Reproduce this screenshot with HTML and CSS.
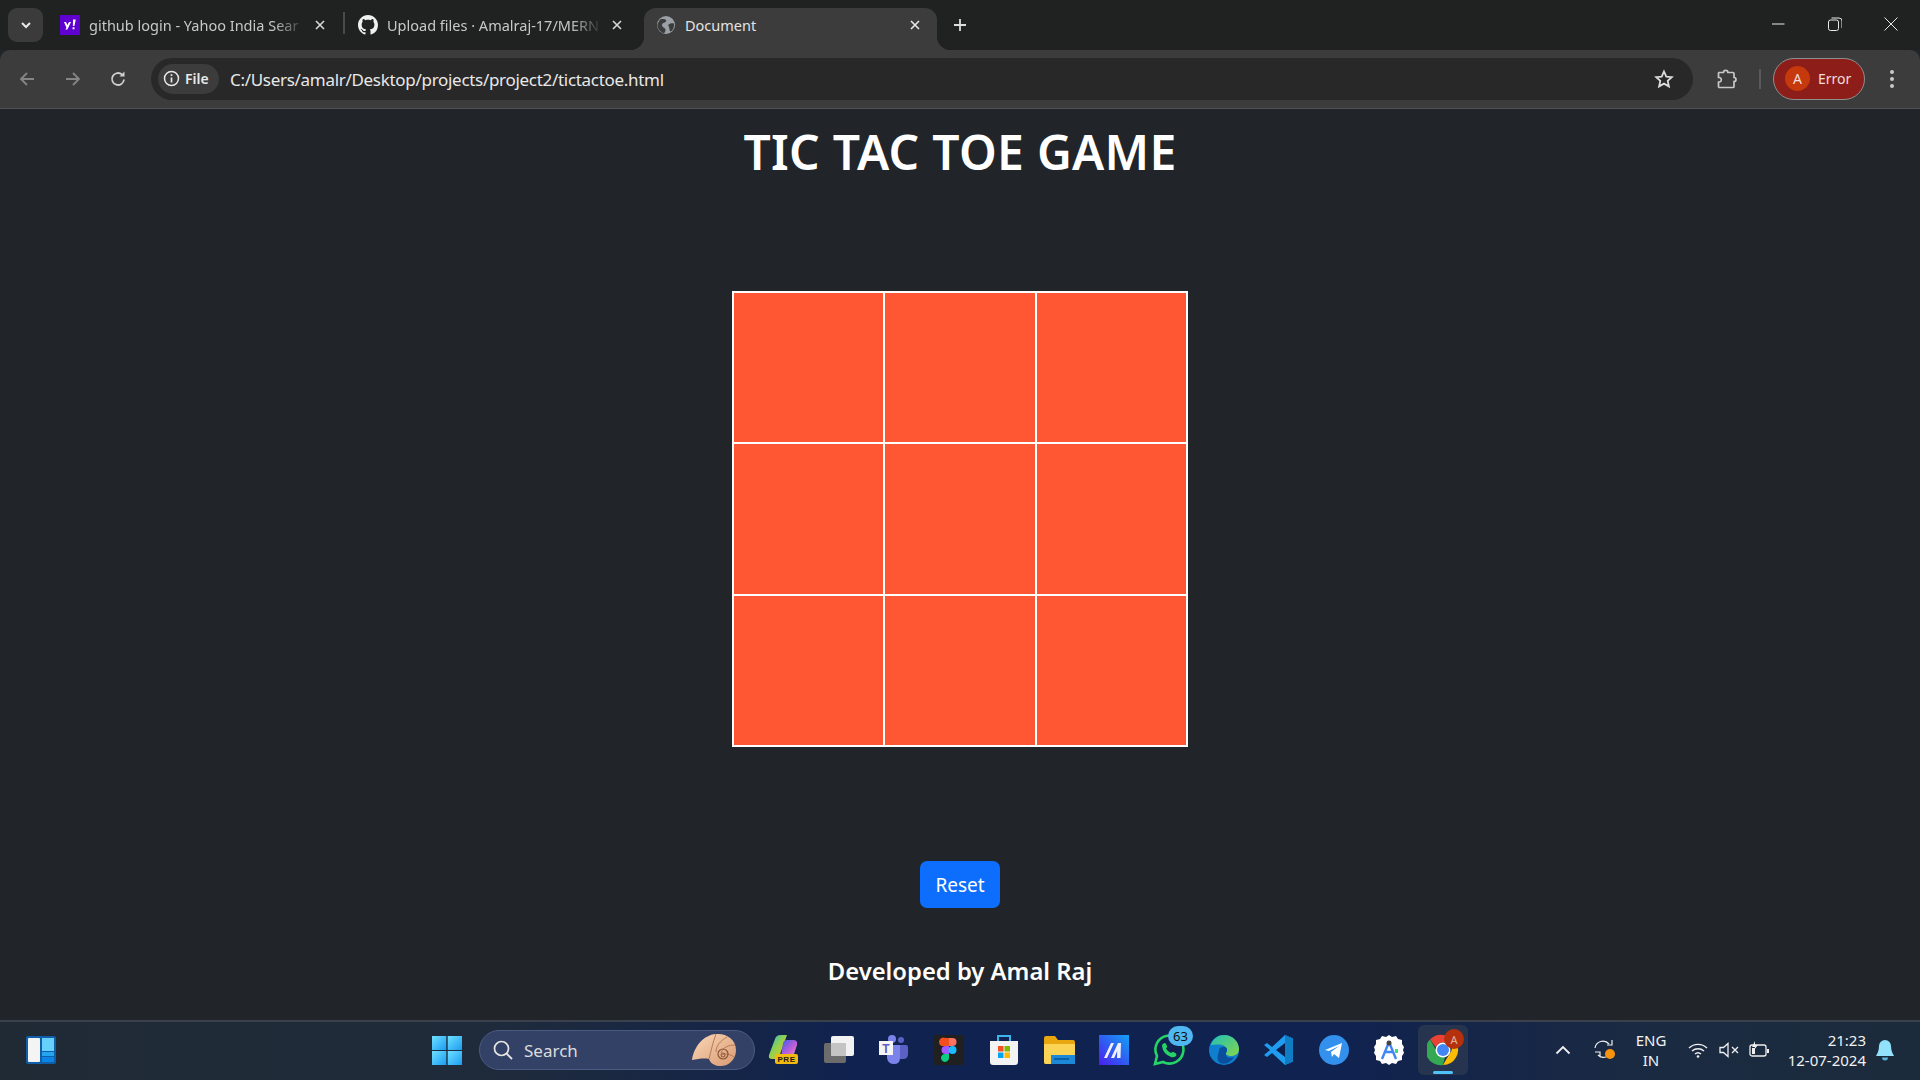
FILE: index.html
```html
<!DOCTYPE html>
<html lang="en">
<head>
    <meta charset="UTF-8">
    <meta name="viewport" content="width=device-width, initial-scale=1.0">
    <title>Document</title>
    <link rel="stylesheet" href="styles.css">
</head>
<body>
    <!-- tab strip -->
    <div class="tabstrip">
        <div class="tab-search">
            <svg width="12" height="12" viewBox="0 0 12 12"><path d="M2 4l4 4 4-4" fill="none" stroke="#e8e8e8" stroke-width="2"/></svg>
        </div>
        <div class="tab tab-one">
            <svg class="favicon" viewBox="0 0 20 20"><rect width="20" height="20" fill="#5f01d1"/><path d="M4 7h2l1.4 3L9 7h2l-3.6 7.5H5.4l1-2.1zM12.6 12.2h1.9v2h-1.900zM13 4.500h2.800l-1.400 6.600h-1.500z" fill="#fff"/></svg>
            <span class="tab-title">github login - Yahoo India Sear</span>
            <svg class="tab-close" viewBox="0 0 12 12"><path d="M2 2l8 8M10 2l-8 8" stroke="#d8d8d8" stroke-width="1.600"/></svg>
        </div>
        <div class="tab-sep"></div>
        <div class="tab tab-two">
            <svg class="favicon" viewBox="0 0 16 16"><path fill="#f0f0f0" d="M8 0C3.580 0 0 3.580 0 8c0 3.540 2.290 6.530 5.470 7.590.4.070.55-.17.55-.38 0-.19-.01-.82-.01-1.490-2.010.37-2.530-.49-2.690-.94-.09-.23-.48-.94-.82-1.130-.28-.15-.68-.52-.01-.53.63-.01 1.080.58 1.230.82.720 1.210 1.870.87 2.330.66.070-.52.28-.87.510-1.070-1.780-.2-3.640-.89-3.640-3.950 0-.87.310-1.590.820-2.150-.08-.2-.36-1.020.08-2.120 0 0 .67-.21 2.200.82.640-.18 1.320-.27 2-.27s1.360.09 2 .27c1.530-1.040 2.200-.82 2.200-.82.440 1.100.160 1.920.08 2.120.510.560.820 1.270.820 2.150 0 3.070-1.870 3.750-3.650 3.950.290.250.540.730.540 1.480 0 1.070-.010 1.930-.010 2.200 0 .210.150.460.550.380A8.010 8.010 0 0 0 16 8c0-4.420-3.580-8-8-8z"/></svg>
            <span class="tab-title">Upload files · Amalraj-17/MERN</span>
            <svg class="tab-close" viewBox="0 0 12 12"><path d="M2 2l8 8M10 2l-8 8" stroke="#d8d8d8" stroke-width="1.600"/></svg>
        </div>
        <div class="tab tab-active">
            <svg class="favicon favicon-globe" viewBox="0 0 20 20"><circle cx="10" cy="10" r="9" fill="#9aa0a6"/><path d="M4 4.500c2-.8 5-.5 6 .5 1 1.200-1 2.500-2.500 3S5.500 10 6.500 11.500 10 13 9.500 15.500 8 18 7 18C3 16 1 12.500 1.500 9zM12.500 9.500c1.500-1 4-1.500 5.500-.8.400 3-.800 6-3 7.800-1 .2-1.500-1-1.500-2.500s-1.800-3.500-1-4.500z" fill="#3c3c3c"/></svg>
            <span class="tab-title">Document</span>
            <svg class="tab-close" viewBox="0 0 12 12"><path d="M2 2l8 8M10 2l-8 8" stroke="#e8e8e8" stroke-width="1.600"/></svg>
        </div>
        <svg class="new-tab" width="14" height="14" viewBox="0 0 14 14"><path d="M7 1v12M1 7h12" stroke="#dcdcdc" stroke-width="1.800"/></svg>
        <div class="window-controls">
            <svg width="14" height="14" viewBox="0 0 14 14"><path d="M1 7h12.500" stroke="#e8e8e8" stroke-width="1"/></svg>
            <svg width="14" height="14" viewBox="0 0 14 14"><rect x=".5" y="3" width="10" height="10.500" rx="2" fill="none" stroke="#e8e8e8"/><path d="M3.500 1h7.500q3 0 3 3v7" fill="none" stroke="#e8e8e8"/></svg>
            <svg width="14" height="14" viewBox="0 0 14 14"><path d="M.5.500l13 13M13.500.5l-13 13" stroke="#e8e8e8" stroke-width="1"/></svg>
        </div>
    </div>

    <!-- address bar -->
    <div class="toolbar">
        <div class="nav-buttons">
            <svg width="18" height="18" viewBox="0 0 18 18"><path d="M16 9H3M9 3L3 9l6 6" fill="none" stroke="#858585" stroke-width="1.800"/></svg>
            <svg width="18" height="18" viewBox="0 0 18 18"><path d="M2 9h13M9 3l6 6-6 6" fill="none" stroke="#858585" stroke-width="1.800"/></svg>
            <svg width="18" height="18" viewBox="0 0 18 18"><path d="M15 9.500A6 6 0 1 1 13 4.500" fill="none" stroke="#d0d0d0" stroke-width="1.800"/><path d="M15.500 1.500v5h-5z" fill="#d0d0d0"/></svg>
        </div>
        <div class="omnibox">
            <div class="file-chip">
                <svg width="17" height="17" viewBox="0 0 17 17"><circle cx="8.500" cy="8.500" r="7" fill="none" stroke="#e8e8e8" stroke-width="1.500"/><path d="M8.500 7.500v5M8.500 4.300v1.700" stroke="#e8e8e8" stroke-width="1.700"/></svg>
                <span>File</span>
            </div>
            <span class="url">C:/Users/amalr/Desktop/projects/project2/tictactoe.html</span>
            <svg class="star" width="20" height="20" viewBox="0 0 20 20"><path d="M10 2.500l2.300 5.100 5.500.6-4.100 3.700 1.200 5.500L10 14.600l-4.900 2.800 1.200-5.500-4.100-3.700 5.500-.6z" fill="none" stroke="#dcdcdc" stroke-width="1.800"/></svg>
        </div>
        <svg class="puzzle" width="22" height="22" viewBox="0 0 22 22"><path d="M3 4.500h4.500a2.200 2.200 0 0 1 4.400 0H17a1 1 0 0 1 1 1v4a2 2 0 0 1 0 4v5a1 1 0 0 1-1 1H3.500a1 1 0 0 1-1-1v-4.500h1a2.300 2.300 0 0 0 0-4.500h-1V5.500a1 1 0 0 1 .5-1z" fill="none" stroke="#c8c8c8" stroke-width="1.700"/></svg>
        <div class="toolbar-sep"></div>
        <div class="profile-pill">
            <span class="avatar">A</span>
            <span>Error</span>
        </div>
        <svg class="menu-dots" width="6" height="20" viewBox="0 0 6 20"><circle cx="3" cy="3" r="2" fill="#c8c8c8"/><circle cx="3" cy="10" r="2" fill="#c8c8c8"/><circle cx="3" cy="17" r="2" fill="#c8c8c8"/></svg>
    </div>

    <!-- the page itself -->
    <main class="page">
        <h1 class="game-title">TIC TAC TOE GAME</h1>
        <div class="board">
            <button class="cell"></button>
            <button class="cell"></button>
            <button class="cell"></button>
            <button class="cell"></button>
            <button class="cell"></button>
            <button class="cell"></button>
            <button class="cell"></button>
            <button class="cell"></button>
            <button class="cell"></button>
        </div>
        <button class="reset-button">Reset</button>
        <h4 class="credit">Developed by Amal Raj</h4>
    </main>

    <!-- windows taskbar -->
    <footer class="taskbar">
        <svg class="widgets" width="30" height="30" viewBox="0 0 30 30">
            <rect width="30" height="28" y="1" rx="2" fill="#0e5fa8"/>
            <rect x="2" y="3" width="12" height="24" rx="1" fill="#f4f4f4"/>
            <rect x="16" y="3" width="12" height="13" fill="#66cffc"/>
            <rect x="16" y="17" width="12" height="4" fill="#25a4f0"/>
            <rect x="16" y="22" width="12" height="5" fill="#0c84e6"/>
        </svg>

        <svg class="start" width="30" height="30" viewBox="0 0 30 30">
            <defs><linearGradient id="winblue" x1="0" y1="0" x2="1" y2="1"><stop offset="0" stop-color="#6fe0ff"/><stop offset="1" stop-color="#1a9cf2"/></linearGradient></defs>
            <rect x="0" y="1" width="14.300" height="14" fill="url(#winblue)"/>
            <rect x="15.700" y="1" width="14.300" height="14" fill="url(#winblue)"/>
            <rect x="0" y="16" width="14.300" height="14" fill="url(#winblue)"/>
            <rect x="15.700" y="16" width="14.300" height="14" fill="url(#winblue)"/>
        </svg>

        <div class="search-box">
            <svg width="22" height="22" viewBox="0 0 22 22"><circle cx="9.500" cy="9.500" r="7" fill="none" stroke="#e6e6e6" stroke-width="1.700"/><path d="M14.500 14.500l5.500 5.500" stroke="#e6e6e6" stroke-width="1.900"/></svg>
            <span>Search</span>
            <svg class="shell" width="46" height="34" viewBox="0 0 46 34">
                <defs><linearGradient id="shellfill" x1="0" y1="0" x2="1" y2="1"><stop offset="0" stop-color="#fbd8b8"/><stop offset="1" stop-color="#d99a72"/></linearGradient></defs>
                <path d="M1 27C3 14 12 2 25 1c10-1 20 5 20 16 0 10-8 17-17 16-6-.5-9-4-10-7-5-1-11 0-17 1z" fill="url(#shellfill)"/>
                <path d="M25 1c-3 8-5 17-7 25M36 4c-7 4-11 9-11 15M44 12c-6 0-12 2-14 8M43 24c-4-3-9-4-12-2" stroke="#b87a58" stroke-width="1" fill="none"/>
                <circle cx="32" cy="21" r="5" fill="none" stroke="#8a5536" stroke-width="1.200"/>
                <circle cx="32" cy="22" r="2" fill="none" stroke="#8a5536"/>
            </svg>
        </div>

        <div class="apps">
            <div class="app">
                <svg width="32" height="32" viewBox="0 0 32 32">
                    <defs><linearGradient id="cop" x1="0" y1="0" x2="1" y2="1"><stop offset="0" stop-color="#1fb6e6"/><stop offset=".45" stop-color="#8fd14f"/><stop offset="1" stop-color="#f5c518"/></linearGradient><linearGradient id="cop2" x1="0" y1="0" x2="1" y2="1"><stop offset="0" stop-color="#3a5cf0"/><stop offset=".6" stop-color="#c65ed6"/><stop offset="1" stop-color="#f0a0b0"/></linearGradient></defs>
                    <path d="M7 5q1-4 6-4h6l-8 22q-1 2-4 2H4q-4 0-3-4z" fill="url(#cop)"/>
                    <path d="M15 9q1-3 4-3h6q5 0 4 5l-3 9q-1 3-5 3h-8z" fill="url(#cop2)"/>
                    <rect x="7" y="20" width="23" height="10" rx="2" fill="#f2b90f"/>
                    <text x="18.500" y="28.300" class="pre-text">PRE</text>
                </svg>
            </div>
            <div class="app">
                <svg width="32" height="32" viewBox="0 0 32 32"><rect x="1" y="9" width="22" height="20" rx="2" fill="#6c6c6c"/><rect x="8" y="2" width="23" height="20" rx="2" fill="#f2f2f2"/><rect x="8" y="9" width="15" height="13" rx="1" fill="#c4c4c4"/></svg>
            </div>
            <div class="app">
                <svg width="32" height="32" viewBox="0 0 32 32"><circle cx="23" cy="6" r="3" fill="#5b61c4"/><circle cx="14" cy="5" r="4" fill="#7b83eb"/><path d="M19 11h9q2 0 2 2v7q0 5-5 5h-3z" fill="#5b61c4"/><path d="M9 11h12q1 0 1 1v12q0 6-6 6t-7-6z" fill="#7b83eb"/><rect x="1" y="7" width="14" height="14" fill="#f5f5f5"/><text x="8" y="18.500" class="teams-text">T</text></svg>
            </div>
            <div class="app">
                <svg width="30" height="30" viewBox="0 0 30 30"><rect width="30" height="30" fill="#202020"/><path d="M7.500 11a4 4 0 0 1 4-8H15v8z" fill="#f24e1e"/><path d="M15 3h3.500a4 4 0 0 1 0 8H15z" fill="#ff7262"/><path d="M15 11H11.500a4 4 0 0 0 0 8H15z" fill="#a259ff"/><circle cx="18.500" cy="15" r="4" fill="#1abcfe"/><path d="M15 19H11.500a4 4 0 1 0 3.500 4z" fill="#0acf83"/></svg>
            </div>
            <div class="app">
                <svg width="30" height="32" viewBox="0 0 30 32"><path d="M9 7V2h12v5" fill="none" stroke="#3bb4ec" stroke-width="2"/><path d="M1 7h28v21q0 3-3 3H4q-3 0-3-3z" fill="#f3f3f3"/><rect x="9" y="12" width="5.500" height="5.500" fill="#f25022"/><rect x="15.500" y="12" width="5.500" height="5.500" fill="#7fba00"/><rect x="9" y="18.500" width="5.500" height="5.500" fill="#00a4ef"/><rect x="15.500" y="18.500" width="5.500" height="5.500" fill="#ffb900"/></svg>
            </div>
            <div class="app">
                <svg width="32" height="30" viewBox="0 0 32 30"><path d="M1 3q0-2 2-2h9l3 4h15q2 0 2 2v20q0 2-2 2H3q-2 0-2-2z" fill="#e8a70f"/><path d="M1 9h31v18q0 2-2 2H3q-2 0-2-2z" fill="#fbd456"/><rect x="8" y="20" width="24" height="9" fill="#1e88d8"/><rect x="11" y="23" width="15" height="2" fill="#0a5fa8"/></svg>
            </div>
            <div class="app">
                <svg width="30" height="30" viewBox="0 0 30 30"><defs><linearGradient id="mblue" x1="0" y1="1" x2="1" y2="0"><stop offset="0" stop-color="#4b1df0"/><stop offset="1" stop-color="#13a0f5"/></linearGradient></defs><rect width="30" height="30" fill="url(#mblue)"/><path d="M5 23l7-15h3l-7 15zM12 23l7-15h3l-.5 15H18l.2-7-3 7z" fill="#eef0ff"/></svg>
            </div>
            <div class="app">
                <svg width="32" height="32" viewBox="0 0 32 32"><path d="M2 30l2-8A14 14 0 1 1 10 28z" fill="none" stroke="#25d366" stroke-width="2.600"/><path d="M10 10q2-2 3 0l1 2q.5 1-1 2.500 1.500 3 5 4.500 1.500-1.500 2.500-1l2.500 1.500q1 1 0 2.500-2 2-5 1-8-3-9-11 0-1.500 1-2.500z" fill="#25d366"/></svg>
                <span class="count-badge">63</span>
            </div>
            <div class="app">
                <svg width="30" height="30" viewBox="0 0 30 30"><defs><linearGradient id="edge1" x1="0" y1="0" x2="1" y2="1"><stop offset="0" stop-color="#1fc0b8"/><stop offset="1" stop-color="#86d64a"/></linearGradient></defs><circle cx="15" cy="15" r="15" fill="#0f7fd0"/><path d="M2 10C4 3 10 0 15 0c9 0 15 7 15 14 0 5-4 7-8 7-3 0-6-2-5-3 2-2 1-7-4-8-4-1-9 0-11 0z" fill="url(#edge1)"/><path d="M10 16c0-3 3-5 6-4 3 1 2 4 1 6-1 4 3 6 8 4-3 5-8 8-14 6-3-2-3-7-1-12z" fill="#0a4f9c"/></svg>
            </div>
            <div class="app">
                <svg width="30" height="30" viewBox="0 0 30 30"><path d="M21 0l8 3.500v23L21 30 8 18l-5 4-3-2 6-5-6-5 3-2 5 4z" fill="#1f9cf0"/><path d="M21 0l8 3.500v23L21 30z" fill="#0f7cc4"/><path d="M21 8v14l-9-7z" fill="#0b1f4f"/></svg>
            </div>
            <div class="app">
                <svg width="30" height="30" viewBox="0 0 30 30"><circle cx="15" cy="15" r="15" fill="#3390ec"/><path d="M6 15l17-7-3 15-5-4-2 3-1-5 8-6-10 5z" fill="#fff"/></svg>
            </div>
            <div class="app">
                <svg width="30" height="30" viewBox="0 0 30 30"><path d="M15 0l3 2 4-1 2 3 4 1 0 4 2 3-1 3 1 3-2 3 0 4-4 1-2 3-4-1-3 2-3-2-4 1-2-3-4-1 0-4-2-3 1-3-1-3 2-3 0-4 4-1 2-3 4 1z" fill="#fff"/><path d="M15 7l-7 17M15 7l7 17M10 17h10" stroke="#4285f4" stroke-width="2.400" fill="none"/><circle cx="15" cy="8" r="2.500" fill="#444"/><path d="M21 14h3v4h-3z" fill="#3ddc84"/></svg>
            </div>
            <div class="app app-active">
                <svg width="32" height="32" viewBox="0 0 32 32"><path d="M16 1a15 15 0 0 1 13 7.500H16a7.500 7.500 0 0 0-7 5L3 5.500A15 15 0 0 1 16 1z" fill="#ea4335"/><path d="M29 8.500A15 15 0 0 1 16 31l6.500-11.300a7.500 7.500 0 0 0 0-11.200z" fill="#fbbc04"/><path d="M16 31A15 15 0 0 1 3 5.500l6.500 11.300a7.500 7.500 0 0 0 8.500 6z" fill="#34a853"/><circle cx="16" cy="16" r="7.500" fill="#fff"/><circle cx="16" cy="16" r="6" fill="#4285f4"/></svg>
                <span class="chrome-badge">A</span>
                <span class="running-bar"></span>
            </div>
        </div>

        <div class="tray">
            <svg class="tray-chevron" width="16" height="10" viewBox="0 0 16 10"><path d="M1.500 8.500L8 2l6.500 6.500" fill="none" stroke="#f0f0f0" stroke-width="1.800"/></svg>
            <svg class="tray-sync" width="22" height="22" viewBox="0 0 22 22"><path d="M1 9a8 8 0 0 1 14-4" fill="none" stroke="#f0f0f0" stroke-width="1.200"/><path d="M18 1v5h-5" fill="none" stroke="#f0f0f0" stroke-width="1.200"/><path d="M12 18a8 8 0 0 1-8-2M1 13h5v5" fill="none" stroke="#f0f0f0" stroke-width="1.200"/><circle cx="16" cy="15" r="5" fill="#f7930e"/></svg>
            <div class="lang">ENG<br>IN</div>
            <svg class="tray-wifi" width="20" height="16" viewBox="0 0 20 16"><path d="M1 6a13 13 0 0 1 18 0M4 9a9 9 0 0 1 12 0M7 12a4.500 4.500 0 0 1 6 0" fill="none" stroke="#f0f0f0" stroke-width="1.400"/><circle cx="10" cy="14.500" r="1.300" fill="#f0f0f0"/></svg>
            <svg class="tray-sound" width="20" height="16" viewBox="0 0 20 16"><path d="M1 5.500h3.500L9 1.500v13l-4.500-4H1z" fill="none" stroke="#f0f0f0" stroke-width="1.300"/><path d="M13 5l6 6M19 5l-6 6" stroke="#f0f0f0" stroke-width="1.300"/></svg>
            <svg class="tray-battery" width="20" height="18" viewBox="0 0 20 18"><rect x="1" y="4" width="16" height="11" rx="2" fill="none" stroke="#f0f0f0" stroke-width="1.300"/><rect x="18" y="8" width="2" height="4" fill="#f0f0f0"/><path d="M3 13V7h3v6z" fill="#f0f0f0"/><path d="M6 0L3 6h3l-1 3 4-5H6z" fill="#f0f0f0"/></svg>
            <div class="clock">21:23<br>12-07-2024</div>
            <svg class="tray-bell" width="18" height="22" viewBox="0 0 18 22"><path d="M9 1a6 6 0 0 1 6 6c0 5 2 8 3 10H0c1-2 3-5 3-10a6 6 0 0 1 6-6z" fill="#93e2fb"/><path d="M6 18.500h6a3 3 0 0 1-6 0z" fill="#5ab4d8"/></svg>
        </div>
    </footer>
</body>
</html>
```

FILE: styles.css
```css
* {
    box-sizing: border-box;
}

body {
    margin: 0;
    height: 1080px;
    overflow: hidden;
    display: flex;
    flex-direction: column;
    background-color: #212529;
    font-family: "Noto Sans", "Open Sans", sans-serif;
    color: white;
}

/* Tab strip */
.tabstrip {
    height: 50px;
    flex-shrink: 0;
    display: flex;
    align-items: flex-end;
    padding-left: 8px;
    background-color: #202222;
}

.tab-search {
    width: 35px;
    height: 34px;
    margin-bottom: 8px;
    margin-right: 7px;
    display: flex;
    align-items: center;
    justify-content: center;
    border-radius: 9px;
    background-color: #3b3b3b;
}

.tab {
    height: 42px;
    display: flex;
    align-items: center;
    font-size: 14.500px;
    color: #c8c8c8;
    padding-bottom: 8px;
}

.tab-one {
    width: 293px;
    padding-left: 10px;
}

.tab-two {
    width: 291px;
    padding-left: 13px;
    margin-right: 8px;
}

.favicon {
    width: 20px;
    height: 20px;
    flex-shrink: 0;
}

.favicon-globe {
    margin-right: 9px;
}

.tab-one .favicon, .tab-two .favicon {
    margin-right: 9px;
}

.tab-title {
    flex: 1;
    white-space: nowrap;
    -webkit-mask-image: linear-gradient(to right, black 85%, transparent 100%);
    mask-image: linear-gradient(to right, black 85%, transparent 100%);
}

.tab-close {
    width: 12px;
    height: 12px;
    margin-left: 8px;
    margin-right: 17px;
    flex-shrink: 0;
}

.tab-two .tab-close {
    margin-right: 13px;
}

.tab-sep {
    width: 2px;
    height: 22px;
    margin-bottom: 16px;
    background-color: #4a4a4a;
}

.tab-active {
    position: relative;
    width: 293px;
    padding-left: 12px;
    border-radius: 12px 12px 0 0;
    background-color: #3c3c3c;
    color: #e3e3e3;
}

.tab-active .tab-title {
    -webkit-mask-image: none;
    mask-image: none;
}

.tab-active .tab-close {
    margin-right: 16px;
}

/* the little flares either side of the active tab */
.tab-active::before, .tab-active::after {
    content: "";
    position: absolute;
    bottom: 0;
    width: 14px;
    height: 14px;
}

.tab-active::before {
    left: -14px;
    background: radial-gradient(circle at 0 0, transparent 14px, #3c3c3c 14.500px);
}

.tab-active::after {
    right: -14px;
    background: radial-gradient(circle at 100% 0, transparent 14px, #3c3c3c 14.500px);
}

.new-tab {
    margin-left: 16px;
    margin-bottom: 18px;
}

.window-controls {
    margin-left: auto;
    width: 127px;
    margin-right: 22px;
    height: 50px;
    display: flex;
    align-items: center;
    justify-content: space-between;
    padding-bottom: 2px;
}

/* Address bar */
.toolbar {
    height: 59px;
    flex-shrink: 0;
    display: flex;
    align-items: center;
    padding: 0 0 1px 18px;
    background-color: #3c3c3c;
    border-bottom: 1px solid #4e5054;
    border-radius: 10px 10px 0 0;
}

.nav-buttons {
    width: 109px;
    display: flex;
    justify-content: space-between;
}

.omnibox {
    width: 1542px;
    height: 42px;
    margin-left: 24px;
    display: flex;
    align-items: center;
    padding-left: 7px;
    border-radius: 21px;
    background-color: #282828;
}

.file-chip {
    width: 61px;
    height: 30px;
    display: flex;
    align-items: center;
    gap: 5px;
    padding-left: 5px;
    border-radius: 15px;
    background-color: #3c3c3c;
    font-size: 14px;
    font-weight: 600;
    color: #e8e8e8;
}

.url {
    margin-left: 11px;
    padding-top: 1px;
    font-size: 17px;
    letter-spacing: -.3px;
    color: #e8e8e8;
}

.star {
    margin-left: auto;
    margin-right: 19px;
}

.puzzle {
    margin-left: 23px;
}

.toolbar-sep {
    width: 2px;
    height: 20px;
    margin-left: 21px;
    background-color: #5a5a5a;
}

.profile-pill {
    width: 92px;
    height: 42px;
    margin-left: 12px;
    display: flex;
    align-items: center;
    gap: 8px;
    padding-left: 11px;
    border: 1px solid #8e8e8e;
    border-radius: 21px;
    background-color: #8c1d18;
    font-size: 14px;
    color: #f2dedc;
}

.avatar {
    width: 25px;
    height: 25px;
    display: flex;
    align-items: center;
    justify-content: center;
    border-radius: 50%;
    background-color: #c5390c;
}

.menu-dots {
    margin-left: 24px;
}

/* Page */
.page {
    flex: 1;
    display: flex;
    flex-direction: column;
    align-items: center;
}

.game-title {
    margin: 11px 0 0;
    font-size: 48px;
    line-height: 64px;
    font-weight: 600;
    letter-spacing: .3px;
}

.board {
    width: 456px;
    height: 456px;
    margin-top: 107px;
    display: grid;
    grid-template-columns: repeat(3, 1fr);
    grid-template-rows: repeat(3, 1fr);
    gap: 2px;
    padding: 2px;
    background-color: white;
}

.cell {
    padding: 0;
    border: none;
    background-color: #ff5733;
}

.reset-button {
    width: 80px;
    height: 47px;
    margin-top: 114px;
    border: none;
    border-radius: 7px;
    background-color: #0d6efd;
    color: white;
    font-family: inherit;
    font-size: 19px;
}

.credit {
    margin: 45px 0 0;
    font-size: 23.800px;
    line-height: 36px;
    font-weight: 600;
}

/* Taskbar */
.taskbar {
    height: 60px;
    flex-shrink: 0;
    display: flex;
    align-items: center;
    padding: 0 0 2px 26px;
    border-top: 2px solid #3a414d;
    background: linear-gradient(to right, #1f2a35 0%, #1f2b3a 25%, #10224f 45%, #10224f 70%, #1a2a42 85%, #1c2b3b 100%);
}

.widgets {
    flex-shrink: 0;
}

.start {
    flex-shrink: 0;
    margin-left: 376px;
}

.search-box {
    width: 276px;
    height: 40px;
    margin-left: 17px;
    display: flex;
    align-items: center;
    padding-left: 12px;
    border: 1px solid #4a5a80;
    border-radius: 20px;
    background-color: #344166;
    font-size: 17px;
    color: #dcdcdc;
}

.search-box span {
    margin-left: 10px;
}

.shell {
    margin-left: auto;
    margin-right: 17px;
}

.apps {
    display: flex;
    margin-left: 1px;
}

.app {
    position: relative;
    width: 55px;
    height: 50px;
    display: flex;
    align-items: center;
    justify-content: center;
}

.app-active {
    width: 50px;
    margin-left: 2px;
    border-radius: 6px;
    background-color: #26344f;
}

.pre-text {
    font-family: "Liberation Sans", sans-serif;
    font-size: 8px;
    font-weight: bold;
    letter-spacing: .6px;
    text-anchor: middle;
    fill: #1a1a1a;
}

.teams-text {
    font-family: "Liberation Sans", sans-serif;
    font-size: 12px;
    font-weight: bold;
    text-anchor: middle;
    fill: #5b61c4;
}

.count-badge {
    position: absolute;
    top: 1px;
    right: 3px;
    width: 25px;
    height: 20px;
    display: flex;
    align-items: center;
    justify-content: center;
    border-radius: 10px;
    background-color: #4fb8f0;
    font-size: 13px;
    color: #111;
}

.chrome-badge {
    position: absolute;
    top: 4px;
    right: 4px;
    width: 20px;
    height: 20px;
    display: flex;
    align-items: center;
    justify-content: center;
    border-radius: 50%;
    background-color: #b5300c;
    font-size: 11px;
    color: #e8b0a0;
}

.running-bar {
    position: absolute;
    bottom: 1px;
    left: 15px;
    width: 20px;
    height: 3px;
    border-radius: 2px;
    background-color: #4fc3f7;
}

.tray {
    flex: 1;
    display: flex;
    align-items: center;
    color: #f2f2f2;
    font-size: 15px;
}

.tray-chevron {
    margin-left: 87px;
}

.tray-sync {
    margin-left: 23px;
}

.lang {
    width: 40px;
    margin-left: 15px;
    text-align: center;
    line-height: 20px;
}

.tray-wifi {
    margin-left: 17px;
}

.tray-sound {
    margin-left: 11px;
}

.tray-battery {
    margin-left: 10px;
}

.clock {
    width: 97px;
    text-align: right;
    line-height: 20px;
}

.tray-bell {
    margin-left: 10px;
}
```
